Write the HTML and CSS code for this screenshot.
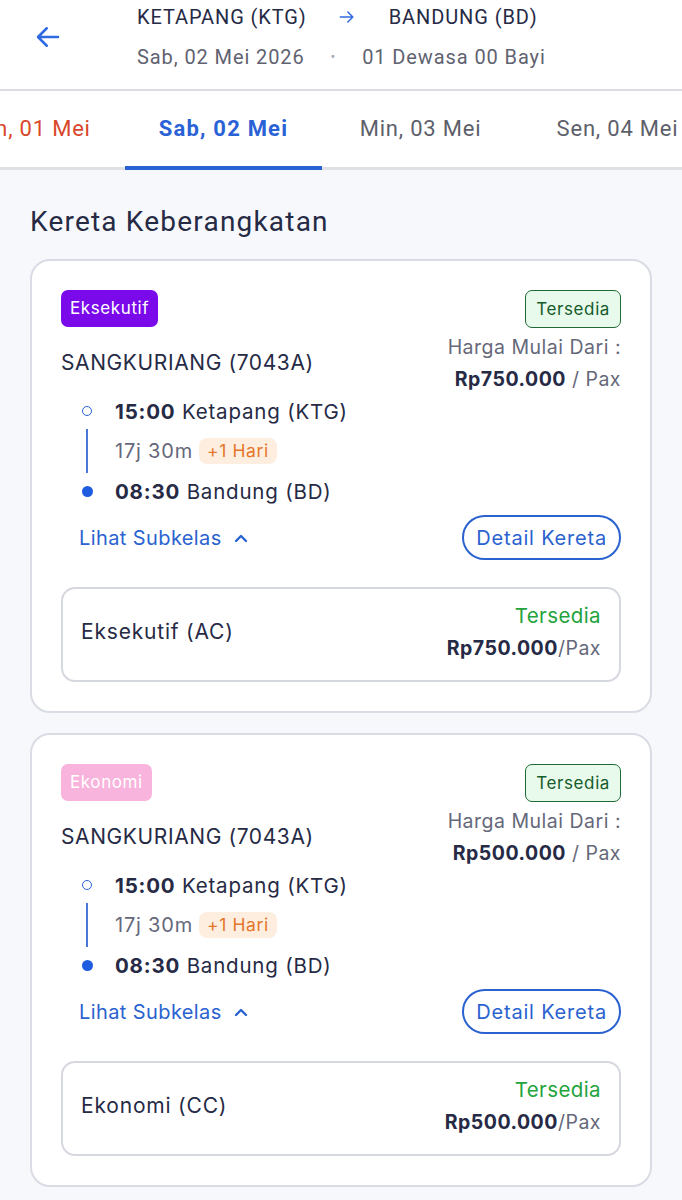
FILE: index.html
```html
<!DOCTYPE html>
<html lang="id">
<head>
  <meta charset="UTF-8" />
  <title>Kereta Keberangkatan</title>
  <link rel="stylesheet" href="styles.css">
</head>
<body>

  <!-- Header rute -->
  <header class="topbar">
    <button class="back-btn" aria-label="Kembali">
      <svg width="30" height="30" viewBox="0 0 24 24" fill="none" stroke="#2f6be0" stroke-width="2" stroke-linecap="round" stroke-linejoin="round">
        <path d="M20 12H4.5M11 5l-7 7 7 7"/>
      </svg>
    </button>
    <div class="route">
      <div class="route-line">
        <span class="station">KETAPANG (KTG)</span>
        <svg class="route-arrow" width="20" height="20" viewBox="0 0 24 24" fill="none" stroke="#2f6be0" stroke-width="1.8" stroke-linecap="round" stroke-linejoin="round">
          <path d="M4 12h15M13 6l6 6-6 6"/>
        </svg>
        <span class="station">BANDUNG (BD)</span>
      </div>
      <div class="route-info">
        <span>Sab, 02 Mei 2026</span>
        <span class="dot">•</span>
        <span>01 Dewasa 00 Bayi</span>
      </div>
    </div>
  </header>

  <!-- Tab tanggal -->
  <nav class="date-tabs">
    <div class="tab holiday">Jum, 01 Mei</div>
    <div class="tab active">Sab, 02 Mei</div>
    <div class="tab">Min, 03 Mei</div>
    <div class="tab">Sen, 04 Mei</div>
  </nav>

  <main class="content">
    <h1 class="section-title">Kereta Keberangkatan</h1>

    <!-- Kartu kereta 1 -->
    <div class="train-card">
      <div class="card-top">
        <div class="card-left">
          <span class="class-badge exec">Eksekutif</span>
          <div class="train-name">SANGKURIANG (7043A)</div>
        </div>
        <div class="card-right">
          <span class="status-badge">Tersedia</span>
          <div class="price-label">Harga Mulai Dari :</div>
          <div class="price"><b>Rp750.000</b> / Pax</div>
        </div>
      </div>

      <div class="timeline">
        <div class="stop">
          <span class="dot-col"><span class="circle"></span></span>
          <span><b>15:00</b> Ketapang (KTG)</span>
        </div>
        <div class="duration">
          <span class="dot-col"><span class="vline"></span></span>
          <span>17j 30m</span>
          <span class="plus-day">+1 Hari</span>
        </div>
        <div class="stop">
          <span class="dot-col"><span class="circle filled"></span></span>
          <span><b>08:30</b> Bandung (BD)</span>
        </div>
      </div>

      <div class="card-actions">
        <span class="subclass-toggle">Lihat Subkelas
          <svg width="14" height="10" viewBox="0 0 14 10" fill="none" stroke="#2a62d0" stroke-width="2.4" stroke-linecap="round" stroke-linejoin="round"><path d="M2 8l5-5 5 5"/></svg>
        </span>
        <button class="detail-btn">Detail Kereta</button>
      </div>

      <div class="subclass">
        <span class="subclass-name">Eksekutif (AC)</span>
        <div class="subclass-right">
          <div class="avail">Tersedia</div>
          <div class="sub-price"><b>Rp750.000</b>/Pax</div>
        </div>
      </div>
    </div>

    <!-- Kartu kereta 2 -->
    <div class="train-card">
      <div class="card-top">
        <div class="card-left">
          <span class="class-badge eco">Ekonomi</span>
          <div class="train-name">SANGKURIANG (7043A)</div>
        </div>
        <div class="card-right">
          <span class="status-badge">Tersedia</span>
          <div class="price-label">Harga Mulai Dari :</div>
          <div class="price"><b>Rp500.000</b> / Pax</div>
        </div>
      </div>

      <div class="timeline">
        <div class="stop">
          <span class="dot-col"><span class="circle"></span></span>
          <span><b>15:00</b> Ketapang (KTG)</span>
        </div>
        <div class="duration">
          <span class="dot-col"><span class="vline"></span></span>
          <span>17j 30m</span>
          <span class="plus-day">+1 Hari</span>
        </div>
        <div class="stop">
          <span class="dot-col"><span class="circle filled"></span></span>
          <span><b>08:30</b> Bandung (BD)</span>
        </div>
      </div>

      <div class="card-actions">
        <span class="subclass-toggle">Lihat Subkelas
          <svg width="14" height="10" viewBox="0 0 14 10" fill="none" stroke="#2a62d0" stroke-width="2.4" stroke-linecap="round" stroke-linejoin="round"><path d="M2 8l5-5 5 5"/></svg>
        </span>
        <button class="detail-btn">Detail Kereta</button>
      </div>

      <div class="subclass">
        <span class="subclass-name">Ekonomi (CC)</span>
        <div class="subclass-right">
          <div class="avail">Tersedia</div>
          <div class="sub-price"><b>Rp500.000</b>/Pax</div>
        </div>
      </div>
    </div>
  </main>

</body>
</html>
```

FILE: styles.css
```css
/* Umum */
body {
  margin: 0;
  background: #f7f8fc;
  font-family: Inter, "Noto Sans", sans-serif;
  color: #262a45;
  overflow: hidden;
}

/* Header rute */
.topbar {
  display: flex;
  align-items: flex-start;
  height: 89px;
  background: #fff;
  border-bottom: 2px solid #dcdde3;
  font-family: Roboto, sans-serif;
}
.back-btn {
  border: none;
  background: none;
  padding: 0;
  margin: 22px 0 0 30px;
  width: 36px;
  height: 30px;
  cursor: pointer;
}
.route {
  margin-left: 71px;
  padding-top: 3px;
}
.route-line {
  display: flex;
  align-items: center;
  height: 28px;
  font-size: 20px;
  letter-spacing: 0.9px;
  color: #262a45;
}
.route-arrow {
  margin: 0 32px 0 30px;
}
.route-info {
  display: flex;
  align-items: center;
  height: 28px;
  margin-top: 12px;
  font-size: 20px;
  letter-spacing: 0.9px;
  color: #5f6270;
}
.route-info .dot {
  color: #a2a8b8;
  font-size: 14px;
  margin: 0 26px;
}

/* Tab tanggal */
.date-tabs {
  display: flex;
  margin-left: -72px;
  height: 76px;
  background: #fff;
  border-bottom: 3px solid #dfe0e4;
  font-family: Roboto, sans-serif;
}
.tab {
  flex: none;
  width: 197px;
  text-align: center;
  line-height: 76px;
  font-size: 22px;
  letter-spacing: 0.8px;
  color: #5d5f6a;
}
.tab.holiday {
  color: #d9472b;
}
.tab.active {
  color: #2a62d6;
  font-weight: 700;
  letter-spacing: 1.2px;
  box-shadow: inset 0 -4px 0 #2a62d6;
  margin-bottom: -3px;
}

/* Konten */
.content {
  padding: 24px 30px 0;
}
.section-title {
  margin: 11px 0 20px;
  font-family: Roboto, sans-serif;
  font-weight: 400;
  font-size: 28px;
  line-height: 34px;
  letter-spacing: 1.2px;
  color: #262a45;
}

/* Kartu kereta */
.train-card {
  background: #fff;
  border: 2px solid #d9dce4;
  border-radius: 20px;
  padding: 29px;
  margin-bottom: 20px;
}
.card-top {
  display: flex;
  justify-content: space-between;
}
.card-left {
  display: flex;
  flex-direction: column;
  align-items: flex-start;
}
.class-badge {
  height: 37px;
  line-height: 37px;
  padding: 0 9px;
  border-radius: 7px;
  font-size: 17px;
  letter-spacing: 0.6px;
  color: #fff;
}
.class-badge.exec {
  background: #7a0aea;
}
.class-badge.eco {
  background: #f8b4dc;
}
.train-name {
  margin-top: 23px;
  font-size: 21px;
  line-height: 26px;
  letter-spacing: 0.6px;
}
.card-right {
  display: flex;
  flex-direction: column;
  align-items: flex-end;
}
.status-badge {
  height: 36px;
  line-height: 36px;
  padding: 0 10px;
  border: 1.5px solid #1f6a35;
  border-radius: 7px;
  background: #e8faec;
  color: #155c2b;
  font-size: 17px;
  letter-spacing: 0.6px;
}
.price-label {
  margin-top: 7px;
  font-size: 19.5px;
  line-height: 24px;
  letter-spacing: 0.5px;
  color: #65687a;
}
.price {
  margin-top: 8px;
  font-size: 19.5px;
  line-height: 24px;
  letter-spacing: 0.5px;
  color: #65687a;
}
.price b {
  color: #262a45;
}

/* Timeline perjalanan */
.timeline {
  padding-left: 18px;
}
.stop, .duration {
  display: flex;
  align-items: center;
  height: 40px;
  font-size: 20.5px;
  letter-spacing: 0.8px;
}
.duration {
  font-size: 20px;
  color: #65687a;
}
.dot-col {
  display: flex;
  justify-content: center;
  align-items: center;
  width: 16px;
  height: 40px;
  margin-right: 20px;
}
.circle {
  width: 10px;
  height: 10px;
  border: 1.5px solid #2a62d6;
  border-radius: 50%;
  box-sizing: border-box;
}
.circle.filled {
  width: 11px;
  height: 11px;
  background: #1f5ce0;
  border: none;
}
.vline {
  width: 1.5px;
  height: 44px;
  background: #4a78d8;
}
.plus-day {
  margin-left: 6px;
  height: 26px;
  line-height: 26px;
  padding: 0 8px;
  border-radius: 8px;
  background: #fdeee0;
  color: #e5762a;
  font-size: 17.5px;
  letter-spacing: 0.6px;
}

/* Aksi */
.card-actions {
  display: flex;
  justify-content: space-between;
  align-items: center;
  margin-top: 4px;
  padding-left: 18px;
}
.subclass-toggle {
  display: flex;
  align-items: center;
  gap: 12px;
  font-size: 20px;
  letter-spacing: 0.4px;
  color: #2a62d0;
}
.detail-btn {
  height: 45px;
  padding: 0 12px;
  border: 2px solid #2a62d0;
  border-radius: 23px;
  background: #fff;
  color: #2a62d0;
  font-family: Inter, sans-serif;
  font-size: 20px;
  letter-spacing: 0.8px;
}

/* Subkelas */
.subclass {
  display: flex;
  justify-content: space-between;
  align-items: center;
  box-sizing: border-box;
  margin-top: 27px;
  height: 95px;
  padding: 0 18px 6px;
  border: 2px solid #d6d8e0;
  border-radius: 14px;
}
.subclass-name {
  font-size: 21px;
  letter-spacing: 0.8px;
}
.subclass-right {
  text-align: right;
}
.avail {
  font-size: 20.5px;
  line-height: 26px;
  letter-spacing: 0.4px;
  color: #22a33c;
}
.sub-price {
  margin-top: 6px;
  font-size: 19.5px;
  line-height: 26px;
  letter-spacing: 0.5px;
  color: #65687a;
}
.sub-price b {
  color: #262a45;
}
```
